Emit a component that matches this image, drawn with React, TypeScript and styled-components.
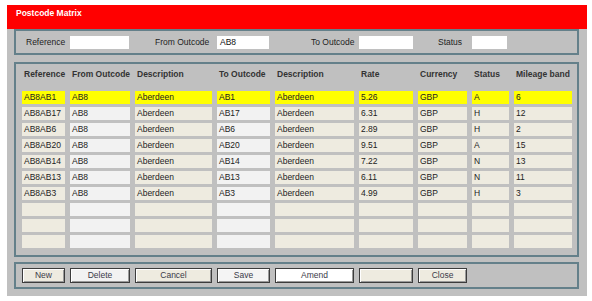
import styled, { createGlobalStyle } from "styled-components";

const GlobalStyle = createGlobalStyle`
  body {
    margin: 0;
    background: #ffffff;
    font-family: "Liberation Sans", Arial, sans-serif;
  }
`;

const COLUMNS = "43px 60px 77px 53px 79px 54px 49px 37px 58px";

const Window = styled.div`
  margin: 5px 0 0 7px;
  width: 580px;
  height: 291px;
  background: #c0c0c0;
  display: flex;
  flex-direction: column;
`;

const TitleBar = styled.div`
  height: 24px;
  box-sizing: border-box;
  padding: 2px 0 0 9px;
  background: #ff0000;
  color: #ffffff;
  font-weight: bold;
  font-size: 8.5px;
  line-height: 12px;
`;

const Panel = styled.div<{ $mt: number; $h: number }>`
  box-sizing: border-box;
  margin: ${(p) => p.$mt}px 8px 0 7px;
  height: ${(p) => p.$h}px;
  border: 2px solid #64808a;
  padding-left: 6px;
`;

const FilterPanel = styled(Panel)`
  display: flex;
  align-items: center;
  padding-left: 10px;
`;

const Field = styled.div<{ $ml: number }>`
  display: flex;
  align-items: center;
  margin-left: ${(p) => p.$ml}px;
`;

const Label = styled.span<{ $w: number }>`
  width: ${(p) => p.$w}px;
  font-size: 8.5px;
  color: #222;
`;

const Input = styled.div<{ $w: number }>`
  width: ${(p) => p.$w}px;
  height: 13px;
  box-sizing: border-box;
  padding-left: 3px;
  background: #ffffff;
  font-size: 8.5px;
  line-height: 13px;
  color: #111;
`;

const Grid = styled(Panel)`
  padding-top: 4px;
`;

const Row = styled.div`
  display: grid;
  grid-template-columns: ${COLUMNS};
  column-gap: 5px;
  margin-bottom: 3px;
`;

const HeaderRow = styled(Row)`
  margin-bottom: 10px;
`;

const Head = styled.div`
  font-size: 8.5px;
  font-weight: bold;
  color: #333;
  line-height: 13px;
  padding-left: 2px;
  white-space: nowrap;
`;

const Cell = styled.div<{ $bg: string }>`
  height: 13px;
  background: ${(p) => p.$bg};
  font-size: 8.5px;
  line-height: 13px;
  padding-left: 2px;
  color: #222;
  white-space: nowrap;
  overflow: hidden;
`;

const ButtonBar = styled(Panel)`
  display: grid;
  grid-template-columns: ${COLUMNS};
  column-gap: 5px;
  align-items: center;
`;

const Button = styled.div<{ $bg: string }>`
  height: 15px;
  box-sizing: border-box;
  border: 1px solid #3c3c3c;
  box-shadow: inset 1px 1px 0 #ffffff, inset -1px -1px 0 #9a9a9a;
  background: ${(p) => p.$bg};
  font-size: 8.5px;
  line-height: 13px;
  text-align: center;
  color: #3a3a48;
`;

const BEIGE = "#eeebe0";
const LIGHT = "#f2f2f2";
const YELLOW = "#ffff00";
const colBg = [BEIGE, LIGHT, BEIGE, LIGHT, BEIGE, BEIGE, BEIGE, BEIGE, BEIGE];

const headers = [
  "Reference",
  "From Outcode",
  "Description",
  "To Outcode",
  "Description",
  "Rate",
  "Currency",
  "Status",
  "Mileage band",
];

const rows: string[][] = [
  ["AB8AB1", "AB8", "Aberdeen", "AB1", "Aberdeen", "5.26", "GBP", "A", "6"],
  ["AB8AB17", "AB8", "Aberdeen", "AB17", "Aberdeen", "6.31", "GBP", "H", "12"],
  ["AB8AB6", "AB8", "Aberdeen", "AB6", "Aberdeen", "2.89", "GBP", "H", "2"],
  ["AB8AB20", "AB8", "Aberdeen", "AB20", "Aberdeen", "9.51", "GBP", "A", "15"],
  ["AB8AB14", "AB8", "Aberdeen", "AB14", "Aberdeen", "7.22", "GBP", "N", "13"],
  ["AB8AB13", "AB8", "Aberdeen", "AB13", "Aberdeen", "6.11", "GBP", "N", "11"],
  ["AB8AB3", "AB8", "Aberdeen", "AB3", "Aberdeen", "4.99", "GBP", "H", "3"],
  ["", "", "", "", "", "", "", "", ""],
  ["", "", "", "", "", "", "", "", ""],
  ["", "", "", "", "", "", "", "", ""],
];

const buttons = [
  { label: "New", bg: BEIGE },
  { label: "Delete", bg: LIGHT },
  { label: "Cancel", bg: BEIGE },
  { label: "Save", bg: "#f4f4f4" },
  { label: "Amend", bg: "#ffffff" },
  { label: "", bg: BEIGE },
  { label: "Close", bg: BEIGE },
];

function App() {
  return (
    <>
      <GlobalStyle />
      <Window>
        <TitleBar>Postcode Matrix</TitleBar>
        <FilterPanel $mt={0} $h={26}>
          <Field $ml={0}>
            <Label $w={44}>Reference</Label>
            <Input $w={59} />
          </Field>
          <Field $ml={26}>
            <Label $w={62}>From Outcode</Label>
            <Input $w={52}>AB8</Input>
          </Field>
          <Field $ml={42}>
            <Label $w={48}>To Outcode</Label>
            <Input $w={54} />
          </Field>
          <Field $ml={25}>
            <Label $w={34}>Status</Label>
            <Input $w={35} />
          </Field>
        </FilterPanel>
        <Grid $mt={7} $h={195}>
          <HeaderRow>
            {headers.map((h, i) => (
              <Head key={i}>{h}</Head>
            ))}
          </HeaderRow>
          {rows.map((r, ri) => (
            <Row key={ri}>
              {r.map((v, ci) => (
                <Cell key={ci} $bg={ri === 0 ? YELLOW : colBg[ci]}>
                  {v}
                </Cell>
              ))}
            </Row>
          ))}
        </Grid>
        <ButtonBar $mt={5} $h={27}>
          {buttons.map((b, i) => (
            <Button key={i} $bg={b.bg}>
              {b.label}
            </Button>
          ))}
        </ButtonBar>
      </Window>
    </>
  );
}

export default App;
